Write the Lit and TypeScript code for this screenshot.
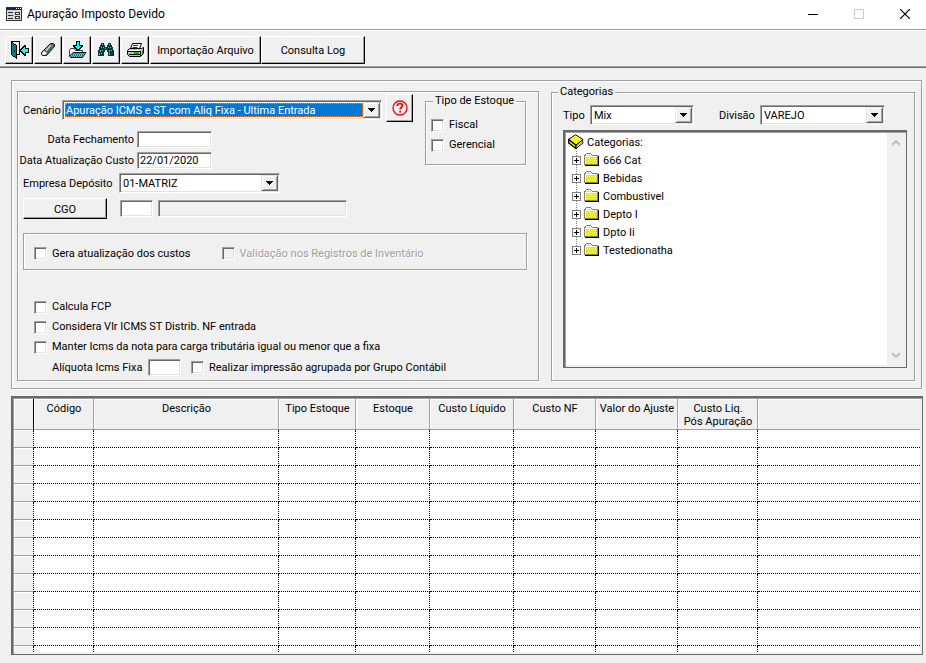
import { LitElement, html, css, svg } from "lit";
import { customElement, property } from "lit/decorators.js";

const base = css`
  * { box-sizing: border-box; }
  button, input, select { font: inherit; color: inherit; margin: 0; border-radius: 0; }
`;

@customElement("combo-box")
class ComboBox extends LitElement {
  @property() value = "";
  @property() name = "";
  @property({ type: Boolean }) active = false;
  static styles = [base, css`
    :host { display: block; position: relative; height: 20px; background: #fff; padding: 2px;
      border: 1px solid; border-color: #a0a0a0 #fff #fff #a0a0a0;
      box-shadow: inset 1px 1px #696969, inset -1px -1px #e3e3e3; }
    select { appearance: none; display: block; width: 100%; height: 100%; border: 0; outline: 0;
      background: none; padding: 1px 17px 0 1px; line-height: 14px; }
    .active { background: #0078d7; color: #fff; border: 1px dotted #ff8728; padding: 1px 0 0; width: calc(100% - 16px); line-height: 12px; }
    .arrow { position: absolute; right: 1px; top: 1px; bottom: 1px; width: 17px; background: #f0f0f0;
      display: grid; place-items: center; pointer-events: none; border: 1px solid;
      border-color: #e3e3e3 #696969 #696969 #e3e3e3;
      box-shadow: inset 1px 1px #fff, inset -1px -1px #a0a0a0; }
  `];
  render() {
    return html`<select class=${this.active ? "active" : ""} aria-label=${this.name}><option>${this.value}</option></select>
      <span class="arrow"><svg width="7" height="4" shape-rendering="crispEdges"><path d="M0 0h7v1H6v1H5v1H4v1H3V3H2V2H1V1H0z"/></svg></span>`;
  }
}

const windowIcon = svg`<svg width="16" height="14" shape-rendering="crispEdges">
  <path fill="#333" d="M0 0h16v14H0z"/><path fill="#0a246a" d="M1 1h14v2H1z"/><path fill="#fff" d="M10 1h1v1h-1zM12 1h1v1h-1zM14 1h1v1h-1z"/><path fill="#d8d8d8" d="M1 3h14v10H1z"/>
  <path fill="#333" d="M2 5h5v1H2zM2 8h5v1H2zM2 11h5v1H2zM9 5h5v3H9zM9 9h5v3H9z"/><path fill="#fff" d="M10 6h3v1h-3zM10 10h3v1h-3z"/></svg>`;

const exitIcon = svg`<svg width="19" height="20" shape-rendering="crispEdges">
  <path fill="#000" d="M1 1h9v14H7v-1h2V2H1z"/>
  <path fill="#000" d="M1 1h1v1h1v1h1v1h2v1h1v14H6v-1H5v-1H3v-1H2v-1H1z"/>
  <path fill="#008080" d="M2 3h1v1h1v1h2v12H5v-1H3v-1H2z"/><path fill="#000" d="M4 10h1v2H4z"/>
  <path fill="#000" d="M14 5h2v3h3v5h-3v3h-2v-1h-1v-1h-1v-1h-1v-1h-1V9h1V8h1V7h1V6h1z"/>
  <path fill="#0ff" d="M14 7h1v2h3v3h-3v2h-1v-1h-1v-1h-1v-1h-1v-1h1V9h1V8h1z"/></svg>`;

const eraserIcon = svg`<svg width="18" height="18">
  <path fill="#fff" d="M0 16h17v1H0z"/>
  <path fill="#606060" stroke="#111" d="M11.500 2.500h3l1 1v2L7.500 14.500h-4l-1-1v-2z"/>
  <path fill="#c8c8c8" d="M11 4h2L8 10 6 9z"/><path fill="#008080" d="M14 5h1v1l-5 6-1-1z"/>
  <path fill="#fff" d="M5 10l3 2-2 2H4l-1-1v-1z"/></svg>`;

const importIcon = svg`<svg width="19" height="18">
  <path fill="#fff" stroke="#333" d="M1.500 15.500v-6l1-2h4l1 2h7v3"/>
  <path fill="#8ab8b8" stroke="#111" d="M1.500 15.500l3.500-4h13l-3.500 5h-12z"/>
  <path fill="none" stroke="#008080" stroke-dasharray="1 1" d="M5 12.500h11M4 13.500h11M4 14.500h11M3 15.500h11"/>
  <path fill="#000" shape-rendering="crispEdges" d="M8 0h4v4h3v2h-1v1h-1v1h-1v1h-1v1H9V9H8V8H7V7H6V6H5V4h3z"/>
  <path fill="#0ff" shape-rendering="crispEdges" d="M9 1h2v4h2v1h-1v1h-1v1H9V7H8V6H7V5h2z"/></svg>`;

const binocularsIcon = svg`<svg width="16" height="14" shape-rendering="crispEdges">
  <path fill="#003c3c" d="M3 0h3v2h1v2h2V2h1V0h3v2h1v2h1v3h1v6h-6V9H9V7H7v2H6v4H0V7h1V4h1V2h1z"/>
  <path fill="#70b8b8" d="M4 1h1v1H4zM3 4h1v1H3zM5 4h1v1H5zM2 7h1v2H2zM4 7h1v1H4zM11 1h1v1h-1zM10 4h1v1h-1zM12 4h1v1h-1zM11 7h1v2h-1zM13 7h1v1h-1zM7 5h1v1H7zM1 10h1v2H1zM3 10h1v1H3zM11 10h1v2h-1z"/></svg>`;

const printerIcon = svg`<svg width="19" height="16">
  <path fill="#fff" stroke="#000" d="M4.500 6.500l2-5h9l-2 5"/><path stroke="#333" d="M7 3.500h5M6.500 5.500h5"/>
  <path fill="#c0c0c0" stroke="#000" d="M3.500 6.500h12l2-1v6l-3 3h-11l-2-2v-4z"/>
  <path stroke="#000" d="M2 9.500h13M3 12.500h11M14.500 9v5"/><path fill="#fff" d="M3 8h11v1H3z"/><path stroke="#777" d="M16.500 8v4"/><path fill="#00c000" d="M8 10h5v2H8z"/></svg>`;

const helpIcon = svg`<svg width="18" height="18" viewBox="0 0 18 18" fill="none" stroke="#f00">
  <circle cx="9" cy="9" r="7" stroke-width="1.3"/><path stroke="#d01010" stroke-width="1.8" d="M6.4 7V6.4C6.4 3.9 11.6 3.9 11.6 6.6C11.6 8.3 9.2 8.2 9.2 10.5M9.2 11.8v1.8"/></svg>`;

const bookIcon = svg`<svg width="16" height="16">
  <path fill="#fff" stroke="#000" d="M7.500 11.500l7-5.500.5 3-7 5.500z"/>
  <path stroke="#999" d="M8 12.500l7-5"/>
  <path fill="#f4f400" stroke="#000" d="M.5 5.500L7.500.8l7.500 4.700-7 5.500z"/>
  <path fill="#e0e000" stroke="#000" stroke-width="1.3" d="M.6 5.500v3.500l7.200 5.500v-3.500z"/>
  <path fill="none" stroke="#ffffa0" d="M2.500 5.500l5-3.300 5 3.200"/></svg>`;

const folderIcon = svg`<svg width="16" height="14" shape-rendering="crispEdges">
  <path fill="#000" d="M14 3h1v10H1v-1h13z"/><path fill="#808080" d="M2 0h5v1h1v1h6v10H0V2h1V1h1z"/>
  <path fill="#fff" d="M2 1h5v1h1v1h5v1H2v7H1V3h1z"/><path fill="#e8e800" d="M2 4h11v7H2zM3 2h4v1H3z"/>
  <path fill="#ffff80" d="M3 5h1v1H3zM5 5h1v1H5zM7 5h1v1H7zM9 5h1v1H9zM11 5h1v1h-1zM4 7h1v1H4zM6 7h1v1H6zM8 7h1v1H8zM10 7h1v1h-1zM12 7h1v1h-1zM3 9h1v1H3zM5 9h1v1H5zM7 9h1v1H7zM9 9h1v1H9zM11 9h1v1h-1z"/></svg>`;

const tools = [
  { label: "Sair", icon: exitIcon },
  { label: "Limpar", icon: eraserIcon },
  { label: "Importar", icon: importIcon },
  { label: "Pesquisar", icon: binocularsIcon },
  { label: "Imprimir", icon: printerIcon },
];
const categories = ["666 Cat", "Bebidas", "Combustivel", "Depto I", "Dpto Ii", "Testedionatha"];
const columns = [
  { label: "Código", cls: "c60" },
  { label: "Descrição", cls: "c185" },
  { label: "Tipo Estoque", cls: "c77" },
  { label: "Estoque", cls: "c74" },
  { label: "Custo Líquido", cls: "c84" },
  { label: "Custo NF", cls: "c82" },
  { label: "Valor do Ajuste", cls: "c82" },
  { label: "Custo Liq.\nPós Apuração", cls: "c80" },
  { label: "", cls: "rest" },
];
const rows = Array.from({ length: 13 });

@customElement("app-root")
class AppRoot extends LitElement {
  static styles = [base, css`
    :host { display: flex; flex-direction: column; height: 100vh; overflow: hidden; background: #f0f0f0; color: #000;
      font: 11px/14px Roboto, "Liberation Sans", sans-serif; white-space: nowrap; }
    .title { display: flex; align-items: center; height: 30px; padding: 0 6px 2px; gap: 5px; background: #fff; border-bottom: 1px solid #a0a0a0; flex: none; }
    h1 { flex: 1; margin: 0; font: 12px/16px Roboto, sans-serif; }
    .caption { border: 0; background: none; padding: 0; width: 46px; height: 26px; display: grid; place-items: center; }
    .controls { display: flex; margin-right: -8px; }
    .toolbar { display: flex; align-items: flex-start; padding: 5px 5px 2px; border-top: 1px solid #fff; border-bottom: 1px solid #696969; box-shadow: inset 0 -1px #a0a0a0; height: 38px; flex: none; }
    .raised { background: #f0f0f0; border: 1px solid; border-color: #fff #000 #000 #fff; box-shadow: inset -1px -1px #a0a0a0; padding: 0; display: grid; place-items: center; }
    .tool { width: 28px; height: 28px; }
    .tools { display: flex; gap: 1px; padding-right: 1px; }
    .text { height: 28px; padding: 2px 0 0; }
    .w111 { width: 111px; } .w104 { width: 104px; }
    .etched { border: 1px solid #a0a0a0; box-shadow: 1px 1px #fff, inset 1px 1px #fff; margin: 0; min-width: 0; }
    .main { display: flex; gap: 12px; margin: 12px 4px 0 11px; padding: 4px 6px 7px 5px; flex: none; }
    .left { width: 522px; margin-top: 6px; padding: 2px 11px 2px 5px; flex: none; }
    .top { display: flex; align-items: flex-start; gap: 12px; }
    .fields { width: 390px; }
    .row { display: flex; align-items: center; height: 21px; gap: 3px; }
    .row.scenario { height: 32px; margin-bottom: 3px; }
    .row.store { height: 23px; margin-bottom: 4px; }
    .row.scenario > span, .row.store > span { padding-top: 2px; }
    .grow { flex: 1; }
    .l36 { width: 36px; } .l111 { width: 111px; display: flex; justify-content: flex-end; } .l93 { width: 93px; }
    .w161 { width: 161px; } .w125 { width: 125px; }
    .help { width: 27px; height: 28px; align-self: flex-start; margin-left: 1px; }
    .cgo { width: 84px; height: 21px; margin-right: 10px; padding-top: 2px; }
    .field { height: 17px; background: #fff; border: 1px solid; border-color: #a0a0a0 #fff #fff #a0a0a0; outline: 0;
      box-shadow: inset 1px 1px #696969, inset -1px -1px #e3e3e3; padding: 0 2px; width: 75px; }
    .small { width: 33px; } .long { width: 189px; margin-left: 2px; }
    .field:disabled { background: #f0f0f0; }
    legend { padding: 0 2px; margin-left: 2px; background: #f0f0f0; height: 14px; }
    .stock { width: 101px; height: 71px; padding: 7px 5px; }
    .check { display: flex; align-items: center; gap: 5px; height: 20px; }
    .check input { appearance: none; width: 13px; height: 13px; flex: none; background: #fff; border: 1px solid; border-color: #a0a0a0 #fff #fff #a0a0a0;
      box-shadow: inset 1px 1px #696969, inset -1px -1px #e3e3e3; }
    .check.off { color: #a0a0a0; text-shadow: 1px 1px #fff; }
    .check.off input { background: #f0f0f0; }
    .update { display: flex; align-items: center; gap: 31px; height: 37px; margin-top: 14px; padding: 4px 10px 0; }
    .options { margin-top: 27px; padding-left: 11px; }
    .rate { display: flex; align-items: center; height: 21px; padding-left: 18px; gap: 3px; }
    .rate .small { margin-right: 7px; }
    .cats { flex: 1; padding: 6px 7px 12px 11px; display: flex; flex-direction: column; gap: 5px; }
    .cats legend { margin-left: -5px; }
    .filters { display: flex; align-items: center; gap: 3px; height: 20px; }
    .filters span { padding-top: 2px; }
    .l24 { width: 24px; } .l38 { width: 38px; } .w104.type { margin-right: 22px; }
    .sunken { background: #fff; border: 2px solid #696969; border-right-width: 1px; border-bottom-width: 1px;
      box-shadow: inset 1px 1px #a0a0a0, inset -2px -2px #f0f0f0; }
    .tree { display: flex; height: 238px; padding: 1px 2px 2px 1px; }
    ul { list-style: none; margin: 0; padding: 0 0 0 2px; flex: 1; }
    li span { padding-top: 1px; }
    .root { display: flex; align-items: center; height: 18px; gap: 3px; }
    .node { display: flex; align-items: center; height: 18px; padding-left: 4px; gap: 3px;
      background: repeating-linear-gradient(#808080 0 1px, transparent 1px 2px) 8px 0 / 1px 100% no-repeat; }
    .node:last-child { background-size: 1px 9px; }
    .plus { width: 9px; height: 9px; padding: 0; border: 1px solid #808080; background: #fff; display: grid; place-items: center; }
    .scroll { width: 17px; background: #f0f0f0; display: flex; flex-direction: column; justify-content: space-between; }
    .scroll button { border: 0; background: none; padding: 0; height: 20px; display: grid; place-items: center; }
    .grid { flex: 1; min-height: 0; overflow: hidden; margin: 7px 3px 8px 11px; padding: 1px 2px 2px 1px; }
    .clip { height: 100%; overflow: hidden; }
    table { border-collapse: separate; border-spacing: 0; table-layout: fixed; width: 100%; }
    th { font-weight: 400; background: #f0f0f0; border-right: 1px solid #a0a0a0; border-bottom: 1px solid #a0a0a0; box-shadow: inset 1px 1px #fff; padding: 0; }
    thead th { height: 31px; padding: 3px 0 0 1px; vertical-align: top; line-height: 13px; white-space: pre-line; }
    .corner { width: 20px; border-right-color: #000; }
    td { padding: 0; height: 18px; border-right: 1px dotted #000; border-bottom: 1px dotted #000; }
    td:last-child, th:last-child { border-right: 0; }
    tbody th { border-right: 1px dotted #000; }
    .c60 { width: 60px; } .c185 { width: 185px; } .c77 { width: 77px; } .c74 { width: 74px; } .c84 { width: 84px; } .c82 { width: 82px; } .c80 { width: 80px; }
  `];

  check(label: string, off = false) {
    return html`<label class="check ${off ? "off" : ""}"><input type="checkbox" ?disabled=${off}>${label}</label>`;
  }

  render() {
    return html`
      <header class="title">${windowIcon}<h1>Apuração Imposto Devido</h1>
        <div class="controls">
          <button class="caption" aria-label="Minimizar"><svg width="10" height="10"><path d="M0 5h10v1H0z"/></svg></button>
          <button class="caption" aria-label="Maximizar" disabled><svg width="10" height="10"><path fill="none" stroke="#ccc" d="M.5.5h9v9h-9z"/></svg></button>
          <button class="caption" aria-label="Fechar"><svg width="10" height="10"><path stroke="#000" stroke-width="1.2" d="M0 0l10 10M10 0L0 10"/></svg></button>
        </div>
      </header>
      <nav class="toolbar">
        <div class="tools">${tools.map((t) => html`<button class="raised tool" aria-label=${t.label}>${t.icon}</button>`)}</div>
        <button class="raised text w111">Importação Arquivo</button>
        <button class="raised text w104">Consulta Log</button>
      </nav>
      <section class="etched main">
        <section class="etched left">
          <div class="top">
            <div class="fields">
              <div class="row scenario"><span class="l36">Cenário</span>
                <combo-box class="grow" name="Cenário" active value="Apuração ICMS e ST com Aliq Fixa - Ultima Entrada"></combo-box>
                <button class="raised help" aria-label="Ajuda">${helpIcon}</button></div>
              <div class="row"><label class="l111" for="close">Data Fechamento</label><input class="field" id="close"></div>
              <div class="row"><label class="l111" for="cost">Data Atualização Custo</label><input class="field" id="cost" value="22/01/2020"></div>
              <div class="row store"><span class="l93">Empresa Depósito</span><combo-box class="w161" name="Empresa Depósito" value="01-MATRIZ"></combo-box></div>
              <div class="row"><button class="raised cgo">CGO</button>
                <input class="field small" aria-label="Código CGO"><input class="field long" aria-label="Descrição CGO" disabled></div>
            </div>
            <fieldset class="etched stock"><legend>Tipo de Estoque</legend>${this.check("Fiscal")}${this.check("Gerencial")}</fieldset>
          </div>
          <div class="etched update">${this.check("Gera atualização dos custos")}${this.check("Validação nos Registros de Inventário", true)}</div>
          <div class="options">
            ${this.check("Calcula FCP")}
            ${this.check("Considera Vlr ICMS ST Distrib. NF entrada")}
            ${this.check("Manter Icms da nota para carga tributária igual ou menor que a fixa")}
            <div class="rate"><label class="l93" for="rate">Alíquota Icms Fixa</label><input class="field small" id="rate">
              ${this.check("Realizar impressão agrupada por Grupo Contábil")}</div>
          </div>
        </section>
        <fieldset class="etched cats"><legend>Categorias</legend>
          <div class="filters">
            <span class="l24">Tipo</span><combo-box class="w104 type" name="Tipo" value="Mix"></combo-box>
            <span class="l38">Divisão</span><combo-box class="w125" name="Divisão" value="VAREJO"></combo-box>
          </div>
          <div class="sunken tree">
            <ul>
              <li class="root">${bookIcon}<span>Categorias:</span></li>
              ${categories.map((c) => html`<li class="node"><button class="plus" aria-label="Expandir ${c}"><svg width="5" height="5" shape-rendering="crispEdges"><path d="M2 0h1v2h2v1H3v2H2V3H0V2h2z"/></svg></button>${folderIcon}<span>${c}</span></li>`)}
            </ul>
            <div class="scroll">
              <button aria-label="Rolar para cima"><svg width="8" height="6"><path fill="none" stroke="#bfbfbf" stroke-width="2" d="M0 5l4-4 4 4"/></svg></button>
              <button aria-label="Rolar para baixo"><svg width="8" height="6"><path fill="none" stroke="#bfbfbf" stroke-width="2" d="M0 1l4 4 4-4"/></svg></button>
            </div>
          </div>
        </fieldset>
      </section>
      <section class="sunken grid"><div class="clip">
        <table>
          <thead><tr><th class="corner"></th>${columns.map((c) => html`<th class=${c.cls}>${c.label}</th>`)}</tr></thead>
          <tbody>${rows.map(() => html`<tr><th></th>${columns.map(() => html`<td></td>`)}</tr>`)}</tbody>
        </table></div>
      </section>`;
  }
}
